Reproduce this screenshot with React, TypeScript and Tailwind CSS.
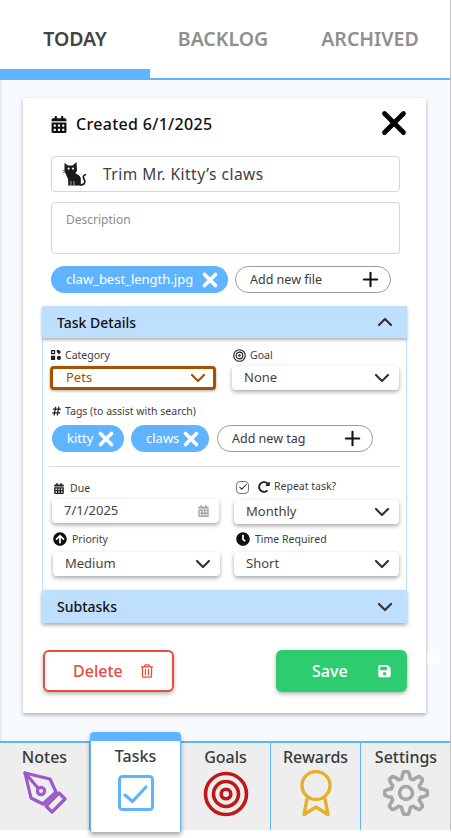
import { FaArrowCircleUp, FaCalendarAlt, FaClock, FaHashtag, FaRedoAlt, FaRegTrashAlt, FaSave } from 'react-icons/fa';
import { ChevronDown, ChevronUp, Check, Plus, X } from 'lucide-react';
import type { ReactNode } from 'react';

// wavy outline for the settings gear
function gearPath() {
    const pts: string[] = [];
    for (let i = 0; i < 240; i++) {
        const a = (i / 240) * Math.PI * 2;
        const r = 18.2 + 3.2 * Math.max(-1, Math.min(1, Math.cos(a * 8) * 1.4));
        pts.push(`${(23 + r * Math.cos(a)).toFixed(2)} ${(23 + r * Math.sin(a)).toFixed(2)}`);
    }
    return `M${pts.join('L')}Z`;
}

function CatIcon() {
    return (
        <svg viewBox="0 0 24 24" className="w-6 h-6 shrink-0">
            <path fill="#1a1a1a" d="M1.5 1l3.5 2.6h4.5L13.5 0l.5 8.5-1.6 2.8 3.4 2c1.3.8 2 2.4 2 4v2.9c0 1.2.4 2.5-.3 3.3H5.2v-6L3 12.4 1.5 8.5z" />
            <path fill="none" stroke="#1a1a1a" strokeWidth="1.7" strokeLinecap="round" d="M17.5 23c3.4 0 5-2 4.2-4.5-.6-1.8-2-2.6-1.2-4.4.3-.7 1-1.2 1.8-1.4" />
            <circle cx="5.6" cy="6.6" r="1.1" fill="#fff" />
            <circle cx="10" cy="6.6" r="1.1" fill="#fff" />
            <path stroke="#fff" strokeWidth="0.6" d="M11 19v4M8 19v4" />
            <path stroke="#1a1a1a" strokeWidth="0.6" d="M0 8.5l2.5.4M0 10.5l2.5-.4" />
        </svg>
    );
}

function CategoryIcon() {
    return (
        <svg viewBox="0 0 12 12" className="w-[10px] h-[10px] shrink-0" fill="#1f1f1f">
            <path d="M0 0h5v5H0zM1.5 1.5v2h2v-2zM7 0l2.5 0L12 2.5 9.5 5 7 2.5zM0 7h5v5H0zM9.5 7a2.5 2.5 0 110 5 2.5 2.5 0 010-5z" fillRule="evenodd" />
        </svg>
    );
}

function GoalIcon() {
    return (
        <svg viewBox="0 0 14 14" className="w-[13px] h-[13px] shrink-0" fill="none" stroke="#1f1f1f">
            <circle cx="7" cy="7" r="6.2" strokeWidth="1.2" />
            <circle cx="7" cy="7" r="3.6" strokeWidth="1.2" />
            <circle cx="7" cy="7" r="1.2" fill="#1f1f1f" strokeWidth="0.5" />
        </svg>
    );
}

function Chip({ label, className }: { label: string; className: string }) {
    return (
        <div className={`h-[27px] rounded-full bg-[#60b4ff] text-white flex items-center justify-between pl-[15px] pr-[7px] text-[13px] ${className}`}>
            <span>{label}</span>
            <X className="w-[22px] h-[22px] shrink-0" strokeWidth={4} />
        </div>
    );
}

function AddButton({ label, className }: { label: string; className: string }) {
    return (
        <div className={`h-[27px] rounded-full border border-[#9a9a9a] bg-white flex items-center justify-between pl-[14px] pr-[8px] text-[12.5px] text-[#3a3a3a] ${className}`}>
            <span className="mt-[2px]">{label}</span>
            <Plus className="w-[23px] h-[23px] shrink-0 text-[#111]" strokeWidth={2.2} />
        </div>
    );
}

function SelectBox({ value, className = '' }: { value: string; className?: string }) {
    return (
        <div className={`h-[24px] rounded bg-white flex items-center justify-between pl-[12px] pr-[5px] text-[13px] text-[#444] shadow-[0_2px_4px_rgba(0,0,0,0.35)] ${className}`}>
            <span>{value}</span>
            <ChevronDown className="w-[24px] h-[24px] shrink-0 text-[#333]" strokeWidth={2.2} />
        </div>
    );
}

function FieldLabel({ icon, children, className = '' }: { icon: ReactNode; children: ReactNode; className?: string }) {
    return (
        <div className={`h-[12px] flex items-center gap-[4px] text-[10.5px] leading-none text-[#3c3c3c] ${className}`}>
            {icon}
            <span>{children}</span>
        </div>
    );
}

function NavCell({ label, icon, active, last }: { label: string; icon: ReactNode; active?: boolean; last?: boolean }) {
    if (active) {
        return (
            <div className="relative z-10 -mt-[11px] w-[91px] h-[100px] shrink-0 flex flex-col items-center bg-white border-x border-[#60b4ff] border-t-[9px] rounded-t shadow-[0_3px_5px_rgba(0,0,0,0.35)]">
                <span className="mt-[5px] h-[20px] leading-[20px] text-[16px] font-medium text-[#3a3a3a]">{label}</span>
                {icon}
            </div>
        );
    }
    return (
        <div className={`w-[90px] shrink-0 flex flex-col items-center ${last ? '' : 'border-r border-[#60b4ff]'}`}>
            <span className="mt-[4px] h-[20px] leading-[20px] text-[16px] font-medium text-[#3a3a3a]">{label}</span>
            {icon}
        </div>
    );
}

export default function App() {
    return (
        <div className="w-[452px] h-[838px] bg-white font-['Noto_Sans',sans-serif] overflow-hidden">
            <div className="w-[451px] h-[830px] border-r border-[#c4c4c4] flex flex-col">
                {/* Tabs */}
                <div className="h-[80px] shrink-0 flex border-b-2 border-[#60b4ff]">
                    <div className="w-[150px] h-[80px] border-b-[11px] border-[#60b4ff] flex justify-center pt-[25px] text-[19.5px] leading-[28px] font-semibold text-[#444]">TODAY</div>
                    <div className="w-[146px] flex justify-center pt-[25px] text-[19.5px] leading-[28px] font-semibold text-[#8f8f8f]">BACKLOG</div>
                    <div className="w-[148px] flex justify-center pt-[25px] text-[19.5px] leading-[28px] font-semibold text-[#8f8f8f]">ARCHIVED</div>
                </div>

                {/* Main area */}
                <div className="relative h-[661px] shrink-0 bg-[#f7fbff] border-l-2 border-[#e6ebf1] pt-[18px] pl-[21px]">
                    <div className="w-[403px] h-[615px] bg-white shadow-[0_2px_4px_rgba(0,0,0,0.3)] px-[19px] pt-[16px]">
                        <div className="ml-[9px] mr-[7px] h-[20px] flex items-center justify-between text-[16px] tracking-[0.3px] font-medium text-[#111]">
                            <div className="flex items-center gap-[9px]">
                                <FaCalendarAlt className="w-[16px] h-[17px] text-[#111]" />
                                <span>Created 6/1/2025</span>
                            </div>
                            <X className="w-[38px] h-[38px] -mr-[13px] -mt-[2px] shrink-0 text-black" strokeWidth={3} />
                        </div>

                        <div className="ml-[9px] mr-[7px] mt-[22px] h-[36px] rounded border border-[#d6d6d6] flex items-center pl-[11px] gap-[16px] text-[15.5px] tracking-[0.5px] text-[#3e3e3e]">
                            <CatIcon />
                            <span className="mt-[1px]">Trim Mr. Kitty’s claws</span>
                        </div>

                        <div className="ml-[9px] mr-[7px] mt-[10px] h-[52px] rounded border border-[#d6d6d6] pl-[14px] pt-[9px] text-[12px] leading-[16px] text-[#8d8d8d]">
                            Description
                        </div>

                        <div className="mx-[9px] mt-[12px] flex gap-[7px]">
                            <Chip label="claw_best_length.jpg" className="w-[177px]" />
                            <AddButton label="Add new file" className="w-[156px]" />
                        </div>

                        {/* Task details */}
                        <div className="mt-[13px] h-[32px] bg-[#bfdfff] flex items-center justify-between pl-[15px] pr-[10px] text-[14px] font-medium text-[#111] shadow-[0_2px_3px_rgba(0,0,0,0.3)] relative">
                            <span>Task Details</span>
                            <ChevronUp className="w-[24px] h-[24px] shrink-0 text-[#333]" strokeWidth={2.2} />
                        </div>
                        <div className="h-[252px] border-x border-[#bfdfff] pt-[11px]">
                            <div className="flex pl-[7px] pr-[7px] gap-[16px]">
                                <div className="w-[166px]">
                                    <FieldLabel icon={<CategoryIcon />} className="ml-[1px]">Category</FieldLabel>
                                    <div className="mt-[5px] h-[24px] rounded border-[3px] border-[#a45100] bg-white flex items-center justify-between pl-[13px] pr-[3px] text-[13px] text-[#a45100] shadow-[0_1px_3px_rgba(0,0,0,0.35)]">
                                        <span>Pets</span>
                                        <ChevronDown className="w-[24px] h-[24px] shrink-0" strokeWidth={2.2} />
                                    </div>
                                </div>
                                <div className="w-[167px]">
                                    <FieldLabel icon={<GoalIcon />} className="ml-[1px]">Goal</FieldLabel>
                                    <SelectBox value="None" className="mt-[5px]" />
                                </div>
                            </div>

                            <FieldLabel icon={<FaHashtag className="w-[9px] h-[10px] text-[#222]" />} className="mt-[15px] ml-[9px]">Tags (to assist with search)</FieldLabel>
                            <div className="mt-[8px] ml-[9px] flex">
                                <Chip label="kitty" className="w-[72px] mr-[7px]" />
                                <Chip label="claws" className="w-[78px] mr-[8px]" />
                                <AddButton label="Add new tag" className="w-[156px]" />
                            </div>

                            <div className="mt-[14px] mx-[6px] h-px bg-[#dcdcdc]" />

                            <div className="mt-[14px] flex pl-[9px] pr-[7px] gap-[15px]">
                                <div className="w-[167px]">
                                    <FieldLabel icon={<FaCalendarAlt className="w-[10px] h-[11px] text-[#222]" />} className="ml-[2px] mt-[1px] gap-[6px]">Due</FieldLabel>
                                    <div className="mt-[5px] h-[24px] rounded bg-white flex items-center justify-between pl-[12px] pr-[10px] text-[13px] text-[#444] shadow-[0_2px_4px_rgba(0,0,0,0.35)]">
                                        <span>7/1/2025</span>
                                        <FaCalendarAlt className="w-[11px] h-[12px] text-[#a9a9a9]" />
                                    </div>
                                </div>
                                <div className="w-[165px]">
                                    <div className="h-[14px] -mt-[1px] flex items-center text-[10.5px] text-[#3c3c3c]">
                                        <div className="ml-[2px] w-[13px] h-[13px] rounded-sm border border-[#777] flex items-center justify-center">
                                            <Check className="w-[10px] h-[10px] text-[#222]" strokeWidth={2.5} />
                                        </div>
                                        <FaRedoAlt className="w-[12px] h-[12px] ml-[9px] mr-[4px] text-[#222]" />
                                        <span>Repeat task?</span>
                                    </div>
                                    <SelectBox value="Monthly" className="mt-[6px]" />
                                </div>
                            </div>

                            <div className="mt-[9px] flex pl-[10px] pr-[7px] gap-[14px]">
                                <div className="w-[167px]">
                                    <FieldLabel icon={<FaArrowCircleUp className="w-[14px] h-[14px] text-[#111]" />} className="gap-[5px]">Priority</FieldLabel>
                                    <SelectBox value="Medium" className="mt-[7px]" />
                                </div>
                                <div className="w-[165px]">
                                    <FieldLabel icon={<FaClock className="w-[14px] h-[14px] text-[#111]" />} className="ml-[2px] gap-[5px]">Time Required</FieldLabel>
                                    <SelectBox value="Short" className="mt-[7px]" />
                                </div>
                            </div>
                        </div>

                        <div className="h-[33px] bg-[#bfdfff] flex items-center justify-between pl-[15px] pr-[10px] text-[14px] font-medium text-[#111] shadow-[0_2px_4px_rgba(0,0,0,0.35)]">
                            <span>Subtasks</span>
                            <ChevronDown className="w-[24px] h-[24px] shrink-0 text-[#333]" strokeWidth={2.2} />
                        </div>

                        {/* Actions */}
                        <div className="mt-[27px] pl-[1px] flex justify-between">
                            <div className="w-[131px] h-[42px] rounded-md border-2 border-[#e74c3c] bg-white flex items-center pl-[28px] gap-[18px] text-[16px] font-medium text-[#e74c3c] shadow-[0_2px_4px_rgba(0,0,0,0.3)]">
                                <span>Delete</span>
                                <FaRegTrashAlt className="w-[12px] h-[14px]" />
                            </div>
                            <div className="w-[131px] h-[42px] rounded-md bg-[#2ecc71] flex items-center pl-[36px] gap-[30px] text-[16px] font-medium text-white shadow-[0_2px_4px_rgba(0,0,0,0.3)]">
                                <span>Save</span>
                                <FaSave className="w-[13px] h-[14px]" />
                            </div>
                        </div>
                    </div>
                    <FaSave className="absolute left-[425px] top-[571px] w-[13px] h-[14px] text-white" />
                </div>

                {/* Bottom nav */}
                <div className="h-[89px] shrink-0 flex bg-[#eeeeee] border-t-2 border-[#60b4ff]">
                    <NavCell
                        label="Notes"
                        icon={
                            <svg viewBox="0 0 44 44" className="w-[44px] h-[44px] mt-[4px]" fill="none" stroke="#9b59c9" strokeWidth="3.2" strokeLinejoin="round" strokeLinecap="round">
                                <path d="M2 2l25 6 6 13-13 12-12-6z" />
                                <path d="M2 2l13 15" />
                                <circle cx="18" cy="20" r="3.6" />
                                <path d="M23 35l13-13 6 6-13 13z" />
                            </svg>
                        }
                    />
                    <NavCell
                        label="Tasks"
                        active
                        icon={
                            <svg viewBox="0 0 36 36" className="w-[36px] h-[36px] mt-[9px]" fill="none" stroke="#60b4ff">
                                <rect x="1.5" y="1.5" width="33" height="33" rx="3" strokeWidth="3" />
                                <path d="M7 20l7.5 6.5L28 12" strokeWidth="3.2" strokeLinecap="round" strokeLinejoin="round" />
                            </svg>
                        }
                    />
                    <NavCell
                        label="Goals"
                        icon={
                            <svg viewBox="0 0 46 46" className="w-[46px] h-[46px] mt-[4px]" fill="none" stroke="#c01818" strokeWidth="3.6">
                                <circle cx="23" cy="23" r="20.5" />
                                <circle cx="23" cy="23" r="12.5" />
                                <circle cx="23" cy="23" r="4.8" />
                            </svg>
                        }
                    />
                    <NavCell
                        label="Rewards"
                        icon={
                            <svg viewBox="0 0 34 46" className="w-[34px] h-[46px] mt-[3px]" fill="none" stroke="#e5b02b" strokeWidth="3.4" strokeLinejoin="round" strokeLinecap="round">
                                <circle cx="17" cy="15.5" r="14" />
                                <path d="M8 29L5 44.5 17 37l12 7.5L26 29" />
                            </svg>
                        }
                    />
                    <NavCell
                        label="Settings"
                        last
                        icon={
                            <svg viewBox="0 0 46 46" className="w-[46px] h-[46px] mt-[3px]" fill="none" stroke="#a6a6a6" strokeWidth="3.6" strokeLinejoin="round">
                                <path d={gearPath()} />
                                <circle cx="23" cy="23" r="6.5" />
                            </svg>
                        }
                    />
                </div>
            </div>
        </div>
    );
}
